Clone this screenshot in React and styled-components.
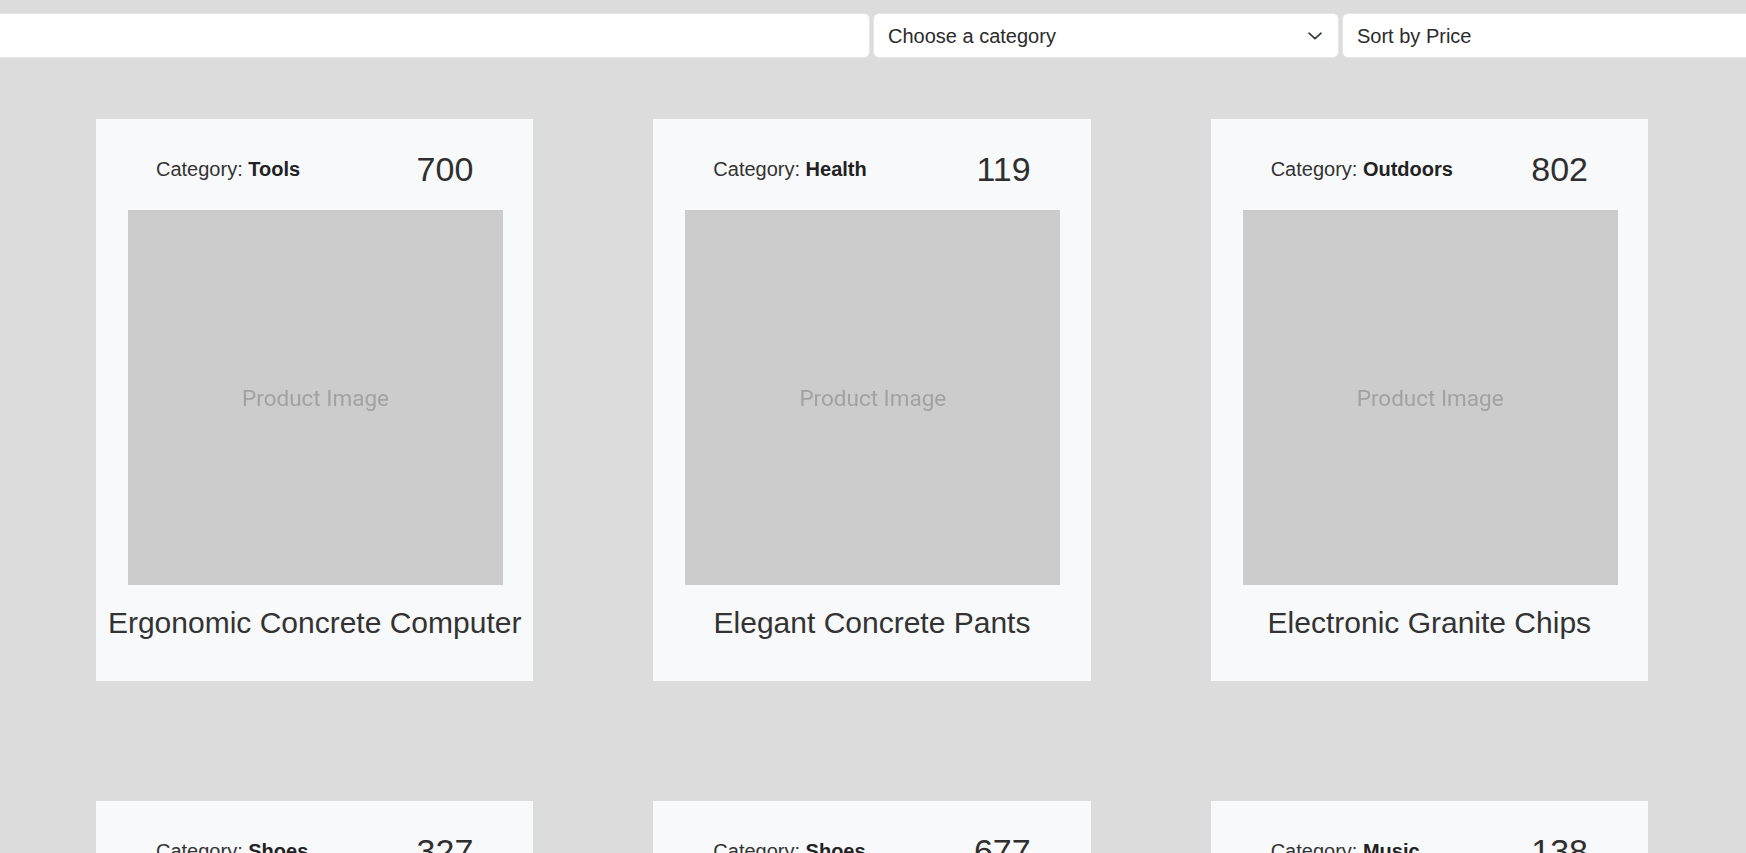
import React from "react";
import styled, { createGlobalStyle } from "styled-components";

const GlobalStyle = createGlobalStyle`
  html, body {
    margin: 0;
    padding: 0;
    background: #dcdcdc;
    overflow: hidden;
  }
  body {
    font-family: "Liberation Sans", Arial, sans-serif;
    color: #333;
  }
  * { box-sizing: border-box; }
`;

const Page = styled.div`
  width: 100%;
  min-height: 100vh;
  background: #dcdcdc;
`;

const Toolbar = styled.div`
  display: flex;
  justify-content: center;
  gap: 3px;
  padding-top: 13px;
  height: 58px;
`;

const Field = styled.div`
  flex: 0 0 ${(p) => p.$width}px;
  height: 45px;
  background: #fff;
  border: 1px solid #e4e6e8;
  border-radius: 6px;
  display: flex;
  align-items: center;
  justify-content: space-between;
  padding: 0 16px 0 14px;
  font-size: 20px;
  color: #2b2b2b;
`;

const FieldText = styled.span`
  line-height: 1;
`;

const Chevron = () => (
  <svg width="14" height="8" viewBox="0 0 14 8" fill="none">
    <path d="M1 1.2 L7 6.6 L13 1.2" stroke="#343a40" strokeWidth="1.7" strokeLinecap="round" strokeLinejoin="round" />
  </svg>
);

const Grid = styled.div`
  display: grid;
  grid-template-columns: repeat(3, 1fr);
  column-gap: 120px;
  row-gap: 120px;
  padding: 61px 98px 80px 96px;
`;

const Card = styled.div`
  background: #f8f9fa;
  padding: 31px 0 40px;
  display: flex;
  flex-direction: column;
  align-items: center;
`;

const CardHeader = styled.div`
  align-self: stretch;
  margin: 0 60px 22px;
  height: 38px;
  display: flex;
  align-items: center;
  justify-content: space-between;
`;

const CategoryLabel = styled.span`
  font-size: 20px;
  line-height: 23px;
  color: #333;
  b {
    font-weight: 700;
    color: #222;
  }
`;

const Price = styled.span`
  font-size: 34px;
  line-height: 38px;
  color: #2f2f2f;
`;

const ImageBox = styled.div`
  align-self: flex-start;
  margin-left: 32px;
  width: 375px;
  height: 375px;
  background: #cccccc;
  display: flex;
  align-items: center;
  justify-content: center;
`;

const ImageText = styled.span`
  font-family: Roboto, "Open Sans", sans-serif;
  font-size: 22.5px;
  color: #a2a2a2;
  filter: blur(0.7px);
`;

const Title = styled.h2`
  margin: 20px 0 0;
  font-size: 30px;
  line-height: 36px;
  font-weight: 400;
  color: #333;
  text-align: center;
  white-space: nowrap;
`;

const products = [
  { category: "Tools", price: 700, name: "Ergonomic Concrete Computer" },
  { category: "Health", price: 119, name: "Elegant Concrete Pants" },
  { category: "Outdoors", price: 802, name: "Electronic Granite Chips" },
  { category: "Shoes", price: 327, name: "Handcrafted Soft Chair" },
  { category: "Shoes", price: 677, name: "Practical Metal Shirt" },
  { category: "Music", price: 138, name: "Sleek Wooden Table" },
];

export default function App() {
  return (
    <Page>
      <GlobalStyle />
      <Toolbar>
        <Field $width={932} />
        <Field $width={466}>
          <FieldText>Choose a category</FieldText>
          <Chevron />
        </Field>
        <Field $width={466}>
          <FieldText>Sort by Price</FieldText>
          <Chevron />
        </Field>
      </Toolbar>
      <Grid>
        {products.map((p, i) => (
          <Card key={i}>
            <CardHeader>
              <CategoryLabel>
                Category: <b>{p.category}</b>
              </CategoryLabel>
              <Price>{p.price}</Price>
            </CardHeader>
            <ImageBox>
              <ImageText>Product Image</ImageText>
            </ImageBox>
            <Title>{p.name}</Title>
          </Card>
        ))}
      </Grid>
    </Page>
  );
}
